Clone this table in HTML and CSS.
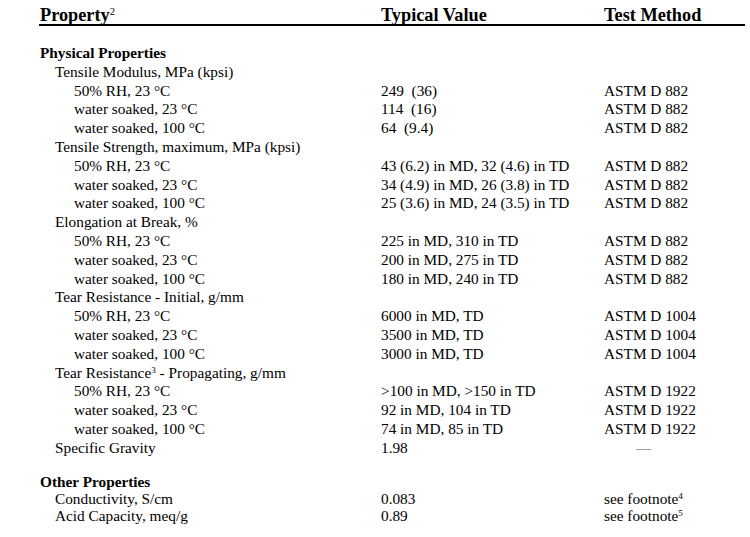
FILE: index.html
```html
<!DOCTYPE html>
<html>
<head>
<meta charset="utf-8">
<link rel="stylesheet" href="styles.css">
</head>
<body>
<div class="sheet">
  <div class="row head"><span>Property<sup>2</sup></span><span>Typical Value</span><span>Test Method</span></div>

  <div class="section physical">
    <div class="row group"><span>Physical Properties</span></div>
    <div class="row l1"><span>Tensile Modulus, MPa (kpsi)</span></div>
    <div class="row l2"><span>50% RH, 23 °C</span><span>249&nbsp; (36)</span><span>ASTM D 882</span></div>
    <div class="row l2"><span>water soaked, 23 °C</span><span>114&nbsp; (16)</span><span>ASTM D 882</span></div>
    <div class="row l2"><span>water soaked, 100 °C</span><span>64&nbsp; (9.4)</span><span>ASTM D 882</span></div>
    <div class="row l1"><span>Tensile Strength, maximum, MPa (kpsi)</span></div>
    <div class="row l2"><span>50% RH, 23 °C</span><span>43 (6.2) in MD, 32 (4.6) in TD</span><span>ASTM D 882</span></div>
    <div class="row l2"><span>water soaked, 23 °C</span><span>34 (4.9) in MD, 26 (3.8) in TD</span><span>ASTM D 882</span></div>
    <div class="row l2"><span>water soaked, 100 °C</span><span>25 (3.6) in MD, 24 (3.5) in TD</span><span>ASTM D 882</span></div>
    <div class="row l1"><span>Elongation at Break, %</span></div>
    <div class="row l2"><span>50% RH, 23 °C</span><span>225 in MD, 310 in TD</span><span>ASTM D 882</span></div>
    <div class="row l2"><span>water soaked, 23 °C</span><span>200 in MD, 275 in TD</span><span>ASTM D 882</span></div>
    <div class="row l2"><span>water soaked, 100 °C</span><span>180 in MD, 240 in TD</span><span>ASTM D 882</span></div>
    <div class="row l1"><span>Tear Resistance - Initial, g/mm</span></div>
    <div class="row l2"><span>50% RH, 23 °C</span><span>6000 in MD, TD</span><span>ASTM D 1004</span></div>
    <div class="row l2"><span>water soaked, 23 °C</span><span>3500 in MD, TD</span><span>ASTM D 1004</span></div>
    <div class="row l2"><span>water soaked, 100 °C</span><span>3000 in MD, TD</span><span>ASTM D 1004</span></div>
    <div class="row l1"><span>Tear Resistance<sup>3</sup> - Propagating, g/mm</span></div>
    <div class="row l2"><span>50% RH, 23 °C</span><span>&gt;100 in MD, &gt;150 in TD</span><span>ASTM D 1922</span></div>
    <div class="row l2"><span>water soaked, 23 °C</span><span>92 in MD, 104 in TD</span><span>ASTM D 1922</span></div>
    <div class="row l2"><span>water soaked, 100 °C</span><span>74 in MD, 85 in TD</span><span>ASTM D 1922</span></div>
    <div class="row l1"><span>Specific Gravity</span><span>1.98</span><span class="dash">—</span></div>
  </div>

  <div class="section other">
    <div class="row group"><span>Other Properties</span></div>
    <div class="row l1"><span>Conductivity, S/cm</span><span>0.083</span><span>see footnote<sup>4</sup></span></div>
    <div class="row l1"><span>Acid Capacity, meq/g</span><span>0.89</span><span>see footnote<sup>5</sup></span></div>
  </div>
</div>
</body>
</html>
```

FILE: styles.css
```css
html, body {
  margin: 0;
  padding: 0;
  background: #ffffff;
}

body {
  font-family: "Liberation Serif", "Times New Roman", serif;
  color: #000000;
  width: 750px;
  height: 537px;
  overflow: hidden;
}

.sheet {
  padding-left: 40px;
  width: 705px;
}

.row {
  display: grid;
  grid-template-columns: 341px 223px 1fr;
  font-size: 15.3px;
  line-height: 18.8px;
  white-space: nowrap;
}

.head {
  margin-top: 7px;
  margin-left: -1px;
  padding-left: 1px;
  font-size: 18.3px;
  font-weight: bold;
  line-height: 17px;
  border-bottom: 2px solid #000;
}

sup {
  font-size: 0.6em;
  line-height: 0;
  vertical-align: 0.55em;
}

.head sup {
  font-weight: normal;
  font-size: 0.58em;
  vertical-align: 0.6em;
}

.physical {
  margin-top: 18px;
}

.group {
  font-weight: bold;
}

.l1 > span:first-child {
  padding-left: 15px;
}

.l2 > span:first-child {
  padding-left: 34px;
}

.dash {
  padding-left: 32px;
  color: #555;
}

.other {
  margin-top: 15px;
}

.other .row {
  line-height: 17.2px;
}
```
